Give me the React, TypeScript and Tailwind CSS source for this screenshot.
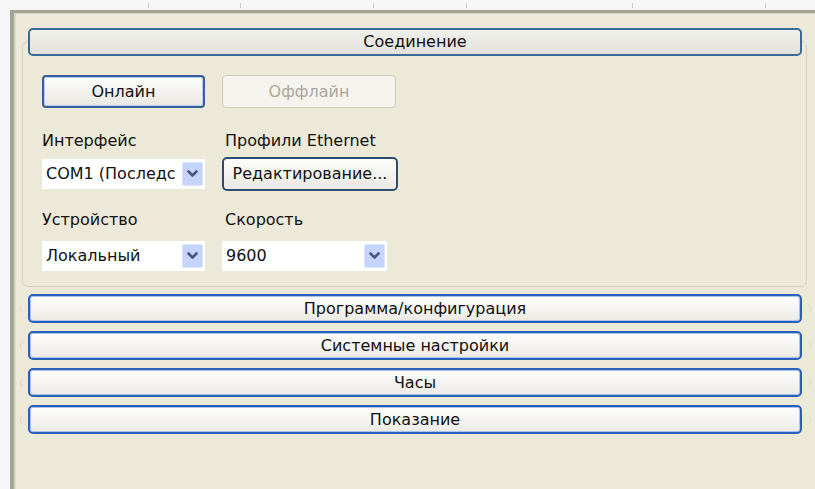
import React from "react";

const font = { fontFamily: '"DejaVu Sans", "Noto Sans", sans-serif' };

function Chevron() {
  return (
    <svg width="11" height="8" viewBox="0 0 11 8">
      <path d="M1.5 1.5 L5.5 5.5 L9.5 1.5" fill="none" stroke="#475a7e" strokeWidth="2.6" strokeLinecap="round" strokeLinejoin="round" />
    </svg>
  );
}

function Combo({ value, width }: { value: string; width: string }) {
  return (
    <div className={`${width} h-[30px] bg-white flex items-center pl-[4px] pr-[2px]`}>
      <span className="flex-1 whitespace-nowrap overflow-hidden text-[16px] text-[#111]">{value}</span>
      <div className="w-[21px] h-[24px] bg-[#c4d4fb] border border-[#dbe5fd] rounded-[2px] flex items-center justify-center shrink-0">
        <Chevron />
      </div>
    </div>
  );
}

function SectionBar({ label }: { label: string }) {
  return (
    <div className="flex items-center mt-[8px] first:mt-[7px]">
      <div className="w-[12px] flex justify-center">
        <div className="w-[4px] h-[8px] border-l border-[#d8d6c8] rounded-l-full" />
      </div>
      <div className="w-[774px] h-[29px] rounded-[5px] border-2 border-[#2c5fb8] shadow-[inset_0_0_0_1px_#a9c3ef] bg-gradient-to-b from-[#fefefe] to-[#eceae4] flex items-center justify-center text-[16px] text-[#111]">
        {label}
      </div>
      <div className="w-[13px] flex justify-center">
        <div className="w-[4px] h-[8px] border-r border-[#d8d6c8] rounded-r-full" />
      </div>
    </div>
  );
}

export default function App() {
  const ticks = [148, 240, 373, 466, 632, 765];
  return (
    <div className="w-[815px] h-[489px] bg-[#f6f6f6] flex flex-col overflow-hidden" style={font}>
      <div className="h-[10px] relative shrink-0">
        {ticks.map((x) => (
          <div key={x} className="absolute top-[3px] w-px h-[5px] bg-[#c8c8c8]" style={{ left: x }} />
        ))}
      </div>
      <div className="flex-1 ml-[10px] border-t-[3px] border-l-[4px] border-[#a5a394] bg-[#ece9d8] flex flex-col">
        <div className="flex-1 border-t border-l-2 border-[#d8d5c4] flex flex-col">
          {/* Connection group */}
          <div className="mt-[27px] ml-[6px] w-[785px] h-[246px] border border-[#d3d1c2] rounded-[6px] flex flex-col">
            <div className="-mt-[14px] ml-[5px] w-[774px] h-[28px] rounded-[5px] border-2 border-[#3a6996] bg-gradient-to-b from-[#f0f0ec] to-[#e2e1db] flex items-center justify-center text-[16px] text-[#111]">
              Соединение
            </div>
            <div className="pl-[19px] flex flex-col">
              <div className="flex gap-[17px] mt-[19px]">
                <button className="w-[163px] h-[33px] rounded-[4px] border-2 border-[#3a5f98] shadow-[inset_0_0_0_1px_#b4cbf2] bg-gradient-to-b from-[#fdfdfd] to-[#e8e7e1] text-[16px] text-[#111]">
                  Онлайн
                </button>
                <button className="w-[174px] h-[33px] rounded-[4px] border border-[#cdcabb] bg-[#f4f3ee] text-[16px] text-[#aca899]">
                  Оффлайн
                </button>
              </div>
              <div className="flex gap-[17px] mt-[24px]">
                <div className="w-[163px] flex flex-col">
                  <span className="text-[16px] leading-[18px] text-[#111]">Интерфейс</span>
                  <div className="mt-[9px]">
                    <Combo value="COM1 (Последс" width="w-[163px]" />
                  </div>
                </div>
                <div className="flex flex-col">
                  <span className="text-[16px] leading-[18px] pl-[3px] text-[#111]">Профили Ethernet</span>
                  <button className="mt-[7px] w-[176px] h-[34px] rounded-[5px] border-2 border-[#2e4d6e] bg-gradient-to-b from-[#fdfdfb] to-[#eae9e3] text-[16px] text-[#111] whitespace-nowrap">
                    Редактирование...
                  </button>
                </div>
              </div>
              <div className="flex gap-[17px] mt-[20px]">
                <div className="w-[163px] flex flex-col">
                  <span className="text-[16px] leading-[18px] text-[#111]">Устройство</span>
                  <div className="mt-[12px]">
                    <Combo value="Локальный" width="w-[163px]" />
                  </div>
                </div>
                <div className="flex flex-col">
                  <span className="text-[16px] leading-[18px] pl-[3px] text-[#111]">Скорость</span>
                  <div className="mt-[12px]">
                    <Combo value="9600" width="w-[165px]" />
                  </div>
                </div>
              </div>
            </div>
          </div>
          {/* Collapsed sections */}
          <div className="flex flex-col">
            <SectionBar label="Программа/конфигурация" />
            <SectionBar label="Системные настройки" />
            <SectionBar label="Часы" />
            <SectionBar label="Показание" />
          </div>
        </div>
      </div>
    </div>
  );
}
